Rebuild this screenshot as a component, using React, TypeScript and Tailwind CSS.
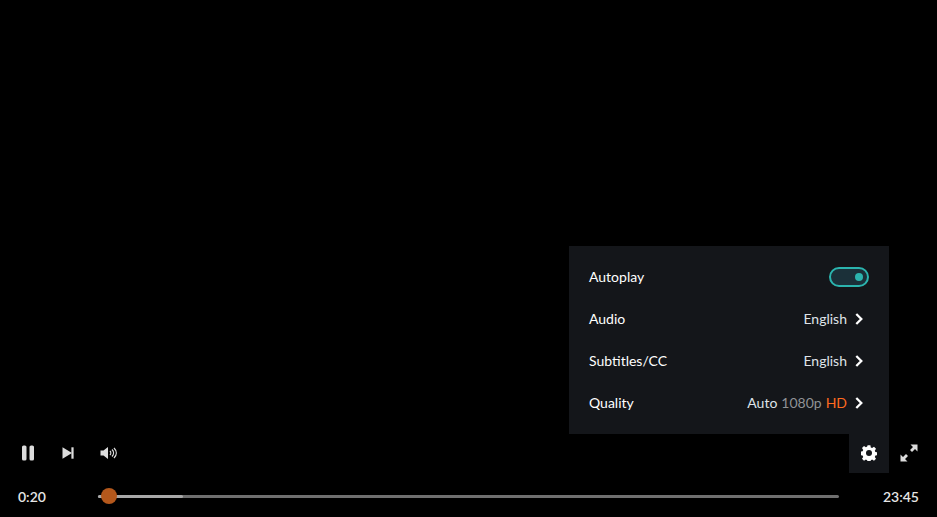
const menuRows = [
  { label: 'Audio', value: 'English' },
  { label: 'Subtitles/CC', value: 'English' },
];

function Chevron() {
  return (
    <svg width="8" height="12" viewBox="0 0 8 12" className="ml-2 mr-[6px] shrink-0">
      <path d="M1.300 1 6.300 6l-5 5" fill="none" stroke="#fff" strokeWidth="2.300" />
    </svg>
  );
}

function SettingsMenu() {
  return (
    <div className="absolute right-[48px] bottom-[83px] w-[320px] h-[188px] bg-[#14161a] px-5 flex flex-col justify-center text-[14px] leading-[42px] text-white">
      <div className="flex items-center justify-between h-[42px]">
        <span>Autoplay</span>
        <span className="w-10 h-5 rounded-full border-2 border-[#2bb4ae] bg-[#1b3039] flex items-center justify-end pr-[4px]">
          <span className="w-2 h-2 rounded-full bg-[#2bb4ae]" />
        </span>
      </div>
      {menuRows.map((row) => (
        <div key={row.label} className="flex items-center justify-between h-[42px]">
          <span>{row.label}</span>
          <span className="flex items-center text-[#dfe3e8]">
            {row.value}
            <Chevron />
          </span>
        </div>
      ))}
      <div className="flex items-center justify-between h-[42px]">
        <span>Quality</span>
        <span className="flex items-center text-[#dfe3e8]">
          Auto
          <span className="ml-1 text-[#8f9295]">1080p</span>
          <span className="ml-1 text-[#ff6a1f]">HD</span>
          <Chevron />
        </span>
      </div>
    </div>
  );
}

function Controls() {
  return (
    <div className="flex items-center justify-between h-[39px] pl-5 pr-[48px]">
      <div className="flex items-center pb-px">
        <svg width="16" height="16" viewBox="0 0 16 16" className="mr-[26px]">
          <rect x="2" y="0.500" width="4.500" height="15" rx="1.600" fill="#dcdcdc" />
          <rect x="9.500" y="0.500" width="4.500" height="15" rx="1.600" fill="#dcdcdc" />
        </svg>
        <svg width="12" height="12" viewBox="0 0 12 12" className="mr-[26px]">
          <path d="M0.500 0.300 10 6 0.500 11.700Z" fill="#dcdcdc" />
          <rect x="9.400" y="0.300" width="2.200" height="11.400" fill="#dcdcdc" />
        </svg>
        <svg width="17" height="14" viewBox="0 0 17 14">
          <path d="M0.500 4.500H3.500L8 1V13L3.500 9.500H0.500Z" fill="#dcdcdc" />
          <path d="M10 5C11 6 11 8 10 9M12 3.500C14 5.500 14 8.500 12 10.500M14 2C17 5 17 9 14 12" fill="none" stroke="#dcdcdc" strokeWidth="1.300" />
        </svg>
      </div>
      <div className="flex items-center">
        <div className="w-10 h-[39px] bg-[#14161a] flex items-center justify-center pb-px">
          <svg width="16" height="16" viewBox="0 0 16 16">
            <path d="M6.600 0.200h2.800l0.400 2.200 1.300 0.600 1.900-1.200 2 2-1.200 1.900 0.600 1.300 2.200 0.400v2.800l-2.200 0.400-0.600 1.300 1.200 1.900-2 2-1.900-1.200-1.300 0.600-0.400 2.200H6.600l-0.400-2.200-1.300-0.600-1.900 1.200-2-2 1.200-1.900-0.600-1.300-2.200-0.400V6.600l2.200-0.400 0.600-1.300-1.200-1.900 2-2 1.900 1.200 1.300-0.600Z" fill="#fff" />
            <circle cx="8" cy="8" r="3" fill="#14161a" />
          </svg>
        </div>
        <svg width="18" height="18" viewBox="0 0 18 18" className="ml-[11px] -mr-[29px] mb-px">
          <path d="M10.500 0.500H17.500V7.500L15 5 12 8 10 6 13 3ZM7.500 17.500H0.500V10.500L3 13 6 10 8 12 5 15Z" fill="#dcdcdc" />
        </svg>
      </div>
    </div>
  );
}

function Timeline() {
  return (
    <div className="flex items-center h-[44px] pt-[2px] pl-[18px] pr-[18px] text-[14px] font-semibold text-[#e6e6e6]">
      <span className="w-[80px]">0:20</span>
      <div className="relative flex-1 h-[3px] bg-[#6f6f6f] rounded-full mr-[44px]">
        <div className="w-[85px] h-full bg-[#a8a8a8] rounded-full" />
        <div className="absolute left-[3px] top-[-7px] w-4 h-4 rounded-full bg-[#b4581c]" />
      </div>
      <span>23:45</span>
    </div>
  );
}

export default function App() {
  return (
    <div
      className="relative w-[937px] h-[517px] bg-black overflow-hidden flex flex-col justify-end"
      style={{ fontFamily: 'Lato, sans-serif' }}
    >
      <SettingsMenu />
      <Controls />
      <Timeline />
    </div>
  );
}
